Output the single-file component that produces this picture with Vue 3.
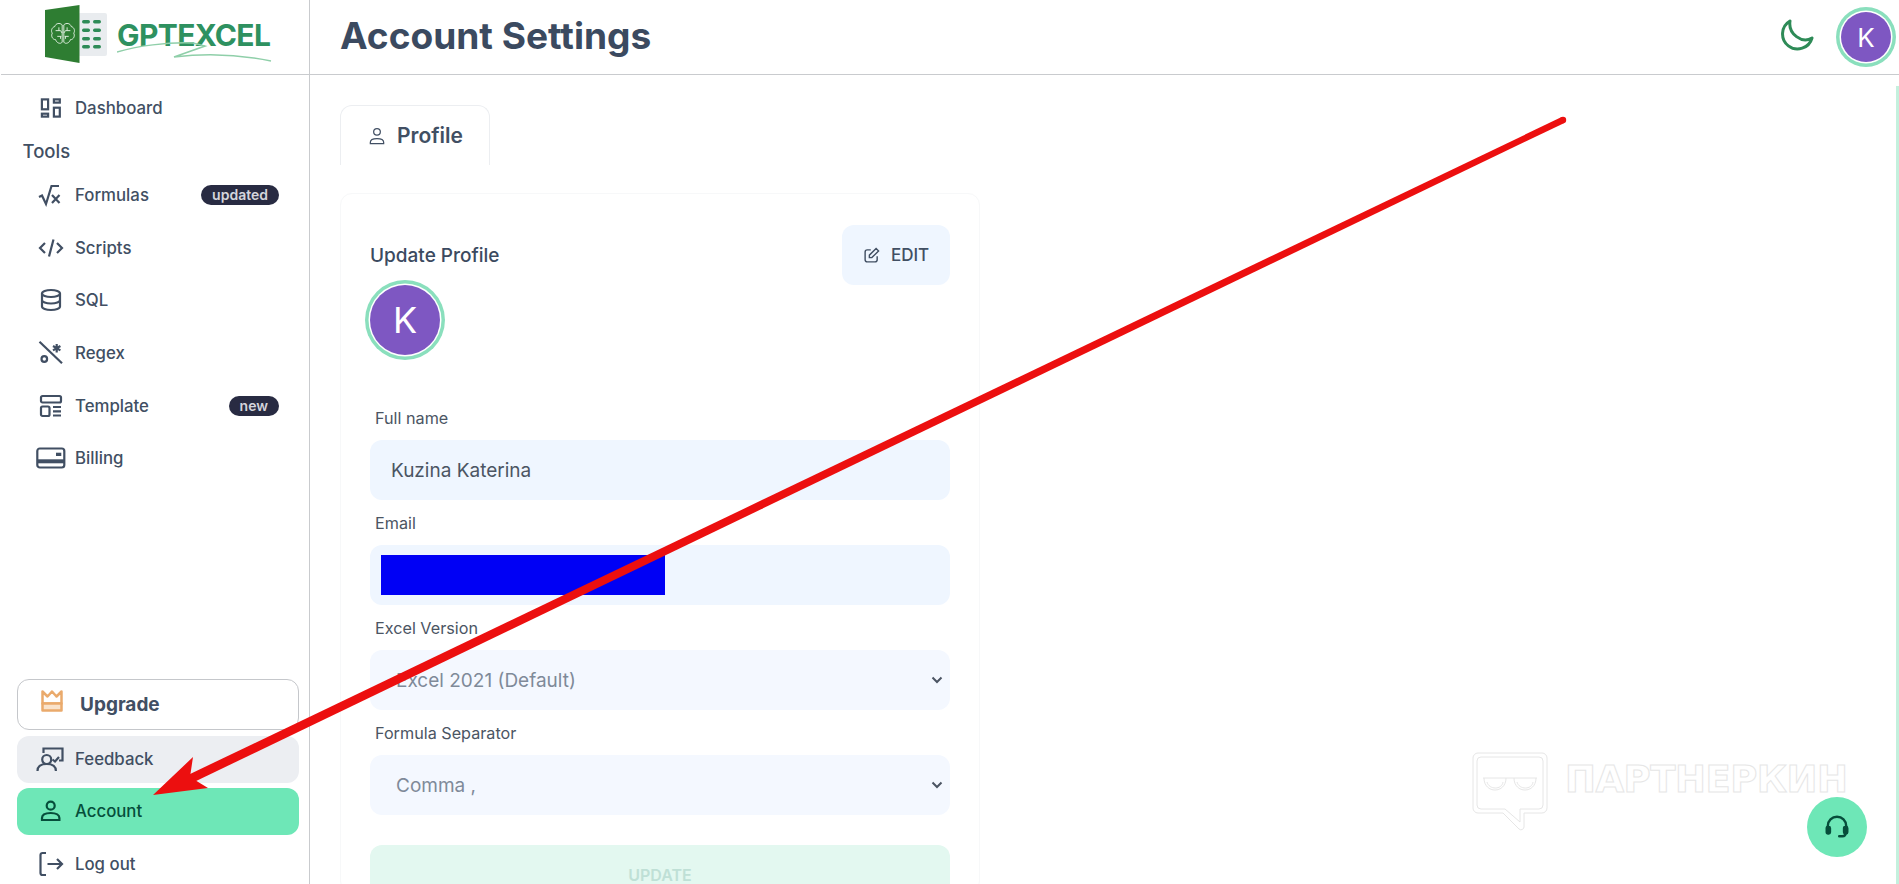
<script setup>
const tools = [
  { label: 'Formulas', badge: 'updated', icon: '<path d="M0 14l3-1.500 4 8.500L12.500 3H20"/><path d="M13 12l7.500 8M20.500 12L13 20"/>' },
  { label: 'Scripts', icon: '<path d="M6 7l-5 5 5 5M18 7l5 5-5 5M14.500 3.500L10 20.500"/>' },
  { label: 'SQL', icon: '<ellipse cx="12" cy="5.500" rx="9" ry="3.500"/><path d="M3 5.500v13c0 2 4 3.500 9 3.500s9-1.500 9-3.500v-13M3 12c0 2 4 3.500 9 3.500s9-1.500 9-3.500"/>' },
  { label: 'Regex', icon: '<path d="M.5.7L23 22.300"/><circle cx="5.300" cy="18" r="2.800"/><path d="M17.700 3v8.500M14 5l7.400 4.400M21.400 5L14 9.400"/>' },
  { label: 'Template', badge: 'new', icon: '<rect x="2" y="2" width="20" height="6.500" rx="1.500"/><rect x="2" y="12.500" width="8.500" height="9.500" rx="1.500"/><path d="M14 13h8M14 17.300h8M14 21.500h8"/>' },
  { label: 'Billing', icon: '<rect x="-1.700" y="2.500" width="27" height="19" rx="2.500"/><path d="M-1.700 15.300h27" stroke-width="4"/><rect x="17" y="6.700" width="5.300" height="3.300" fill="currentColor" stroke="none"/>' }
]

const fields = [
  { label: 'Full name', value: 'Kuzina Katerina' },
  { label: 'Email', value: '', hidden: true }
]

const selects = [
  { label: 'Excel Version', value: 'Excel 2021 (Default)' },
  { label: 'Formula Separator', value: 'Comma ,' }
]
</script>

<template>
  <div class="page">
    <aside class="sidebar">
      <div class="logo">
        <svg class="logo-mark" width="64" height="60" viewBox="0 0 64 60">
          <rect x="33" y="9" width="29" height="43" rx="2" fill="#e9ecef" />
          <path d="M0 6L34.500 1v58L0 53z" fill="#2e7d32" />
          <g fill="#2e8b57">
            <rect x="37" y="16" width="8" height="3.500" rx="1.700" />
            <rect x="48" y="16" width="8" height="3.500" rx="1.700" />
            <rect x="37" y="24.500" width="8" height="3.500" rx="1.700" />
            <rect x="48" y="24.500" width="8" height="3.500" rx="1.700" />
            <rect x="37" y="33" width="8" height="3.500" rx="1.700" />
            <rect x="48" y="33" width="8" height="3.500" rx="1.700" />
            <rect x="37" y="41" width="8" height="3.500" rx="1.700" />
            <rect x="48" y="41" width="8" height="3.500" rx="1.700" />
          </g>
          <g fill="none" stroke="#eaf5ea" stroke-width="1.100" transform="translate(18 29.500) scale(.82) translate(-18 -28.500)">
            <path d="M17 18c-3-3-8-2-9 2-4 1-5 6-3 8-2 3 0 8 4 8 1 4 6 6 8 3zM19 18c3-3 8-2 9 2 4 1 5 6 3 8 2 3 0 8-4 8-1 4-6 6-8 3z" />
            <path d="M9 25h6l2 3M27 25h-6l-2 3M11 32h5M25 32h-5M13 21v4M23 21v4M15 35v-3M21 35v-3" />
          </g>
        </svg>
        <span class="logo-text">GPTEXCEL</span>
        <svg class="logo-swoosh" width="160" height="24" viewBox="0 0 160 24">
          <path d="M0 11C20 5 50 1 76 2 L 88 5 L 57 16 C 90 12 125 14 154 20" fill="none" stroke="#8fcfa9" stroke-width="1.500" />
        </svg>
      </div>

      <a class="nav-row">
        <svg class="icon" viewBox="0 0 24 24"><rect x="2.900" y="3.400" width="6.200" height="9.900" /><rect x="2.900" y="17.700" width="6.200" height="2.900" /><rect x="14.900" y="3.400" width="5.900" height="3.200" /><rect x="14.900" y="11.700" width="5.900" height="8.900" /></svg>
        <span>Dashboard</span>
      </a>
      <div class="section-title">Tools</div>
      <a v-for="item in tools" :key="item.label" class="nav-row">
        <svg class="icon" viewBox="0 0 24 24" v-html="item.icon"></svg>
        <span>{{ item.label }}</span>
        <span v-if="item.badge" class="badge">{{ item.badge }}</span>
      </a>

      <div class="sidebar-bottom">
        <a class="upgrade">
          <svg class="crown" width="24" height="24" viewBox="0 0 24 24" fill="none" stroke="#eaaa6c" stroke-width="2.500" stroke-linejoin="round">
            <path d="M2.500 2.500v12h19v-12l-5 5L12 2.500 7.500 7.500z" />
            <rect x="2.500" y="14.500" width="19" height="7" fill="#f9e3cc" />
          </svg>
          <span>Upgrade</span>
        </a>
        <a class="nav-row feedback">
          <svg class="icon" viewBox="0 0 24 24"><circle cx="7.700" cy="12.500" r="4.500" /><path d="M-1.500 24c0-5 4-7 9.200-7s9.200 2 9.200 7M4.500 6V1.500H23.500V13.500H20M13.500 12.500l2.500 2 4-4.500" /></svg>
          <span>Feedback</span>
        </a>
        <a class="nav-row active">
          <svg class="icon" viewBox="0 0 24 24"><circle cx="11.700" cy="6.700" r="4" /><path d="M3 21v-2c0-3 3-5 8.700-5s8.700 2 8.700 5v2z" /></svg>
          <span>Account</span>
        </a>
        <a class="nav-row">
          <svg class="icon" viewBox="0 0 24 24"><path d="M7 1H3.500a2 2 0 0 0-2 2v18a2 2 0 0 0 2 2H7M8.500 12H23M18 7l5 5-5 5" /></svg>
          <span>Log out</span>
        </a>
      </div>
    </aside>

    <main class="main">
      <header class="topbar">
        <h1>Account Settings</h1>
        <div class="topbar-right">
          <svg class="moon" width="34" height="34" viewBox="0 0 34 34" fill="none" stroke="#2e8b57" stroke-width="3" stroke-linejoin="round"><path d="M10 3A15 15 0 1 0 32 20C22 26 8 16 10 3z" /></svg>
          <div class="avatar small">K</div>
        </div>
      </header>

      <div class="body">
        <div class="content">
          <div class="tab">
            <svg width="20" height="20" viewBox="0 0 24 24" fill="none" stroke="#414f63" stroke-width="1.500"><circle cx="12" cy="7" r="4" /><path d="M4 21v-1.500C4 16.500 7 15 12 15s8 1.500 8 4.500V21z" /></svg>
            <span>Profile</span>
          </div>

          <section class="card">
            <div class="card-head">
              <h2>Update Profile</h2>
              <button class="edit">
                <svg width="17" height="17" viewBox="0 0 24 24" fill="none" stroke="#414f63" stroke-width="2"><path d="M11 4H6a3 3 0 0 0-3 3v11a3 3 0 0 0 3 3h11a3 3 0 0 0 3-3v-5" /><path d="M9 15v-3.500L18.500 2 22 5.500 12.500 15z" /></svg>
                <span>EDIT</span>
              </button>
            </div>
            <div class="avatar large">K</div>

            <div class="fields">
              <div v-for="f in fields" :key="f.label" class="field">
                <label>{{ f.label }}</label>
                <div class="input">
                  <span v-if="!f.hidden">{{ f.value }}</span>
                  <span v-else class="redacted"></span>
                </div>
              </div>
              <div v-for="s in selects" :key="s.label" class="field">
                <label>{{ s.label }}</label>
                <div class="select-wrap">
                  <select class="select" disabled>
                    <option>{{ s.value }}</option>
                  </select>
                  <svg class="chevron" width="12" height="8" viewBox="0 0 12 8" fill="none" stroke="#4b5563" stroke-width="2"><path d="M1.500 1.500L6 6l4.500-4.500" /></svg>
                </div>
              </div>
            </div>

            <button class="update">UPDATE</button>
          </section>
        </div>
        <div class="scroll-line"></div>
      </div>
    </main>

    <div class="watermark">
      <svg width="76" height="80" viewBox="0 0 76 80" fill="none" stroke="#e6e6e6" stroke-width="1">
        <path d="M6 1h64a5 5 0 0 1 5 5v50a5 5 0 0 1-5 5H52v14a3 3 0 0 1-5 2L31 61H6a5 5 0 0 1-5-5V6a5 5 0 0 1 5-5z" />
        <path d="M9 5h58a4 4 0 0 1 4 4v44a4 4 0 0 1-4 4H48v13L33 57H9a4 4 0 0 1-4-4V9a4 4 0 0 1 4-4z" />
        <path d="M11 26h54M12 26c0 16 22 16 22 0M42 26c0 16 22 16 22 0M15 30c2 8 15 8 16 0M45 30c2 8 15 8 16 0" />
      </svg>
      <span>ПАРТНЕРКИН</span>
    </div>

    <button class="support">
      <svg width="26" height="26" viewBox="0 0 24 24" fill="none" stroke="#064e3b" stroke-width="2.200" stroke-linecap="round"><path d="M3.500 14v-3a8.500 8.500 0 0 1 17 0v3M20 17c0 2-1 3.500-3 3.500h-3" /><rect x="2.500" y="12" width="3" height="6" rx="1.200" fill="#064e3b" /><rect x="18.500" y="12" width="3" height="6" rx="1.200" fill="#064e3b" /></svg>
    </button>

    <svg class="arrow" width="1899" height="884" viewBox="0 0 1899 884">
      <circle cx="1563" cy="120" r="3.200" fill="#ec0f0f" />
      <path d="M1564.400 122.900L1561.600 117.100 188 775 192 783z" fill="#ec0f0f" />
      <path d="M153 795L193 757 190 777 208 788z" fill="#ec0f0f" />
    </svg>
  </div>
</template>

<style scoped>
.page {
  position: relative;
  display: flex;
  width: 1899px;
  height: 884px;
  overflow: hidden;
  background: #fff;
  font-family: Inter, "Noto Sans", sans-serif;
  color: #414f63;
}

.sidebar {
  flex: 0 0 309px;
  height: 884px;
  border-right: 1px solid #c9cbce;
  overflow: hidden;
}

.logo {
  position: relative;
  display: flex;
  align-items: flex-start;
  height: 82px;
  padding: 4px 0 0 45px;
  box-sizing: border-box;
}

.logo-mark {
  flex: none;
}

.logo-text {
  margin: 13px 0 0 8px;
  font-size: 30px;
  line-height: 36px;
  font-weight: 700;
  letter-spacing: -0.600px;
  color: #2e9160;
}

.logo-swoosh {
  position: absolute;
  left: 117px;
  top: 41px;
}

.nav-row {
  display: flex;
  align-items: center;
  height: 52.700px;
  padding: 0 30px 0 39px;
  font-size: 16.800px;
  font-weight: 500;
}

.icon {
  flex: none;
  width: 24px;
  height: 24px;
  margin-right: 12px;
  overflow: visible;
  fill: none;
  stroke: currentColor;
  stroke-width: 2.200;
}

.section-title {
  height: 34px;
  padding-left: 22.500px;
  font-size: 18.500px;
  line-height: 33px;
  font-weight: 500;
}

.badge {
  margin-left: auto;
  height: 20px;
  padding: 0 11px;
  border-radius: 10px;
  background: #282b42;
  color: #d4d5dc;
  font-size: 14px;
  line-height: 20px;
  font-weight: 600;
}

.sidebar-bottom {
  margin-top: 193.900px;
}

.upgrade {
  display: flex;
  align-items: center;
  height: 51px;
  margin: 0 10px 6px 17px;
  padding-left: 22px;
  border: 1px solid #c5c7cb;
  border-radius: 12px;
  box-sizing: border-box;
  font-size: 19px;
  font-weight: 700;
}

.crown {
  margin: -7px 16px 0 0;
}

.sidebar-bottom .nav-row {
  height: 47px;
  padding-left: 22px;
  margin: 0 10px 5px 17px;
  border-radius: 12px;
}

.feedback {
  background: #eceef2;
}

.sidebar-bottom .active {
  margin-bottom: 6px;
  background: #6ee7b7;
  color: #064e3b;
}

.main {
  flex: 1;
  min-width: 0;
}

.topbar {
  display: flex;
  align-items: center;
  justify-content: space-between;
  height: 74px;
  padding: 0 2px 0 340px;
  margin-left: -309px;
  border-bottom: 1px solid #c9cbce;
}

h1 {
  margin: -3px 0 0 -1px;
  font-size: 37.100px;
  font-weight: 700;
  color: #3b4a60;
}

.topbar-right {
  display: flex;
  align-items: center;
  gap: 27px;
}

.moon {
  margin-top: -4px;
}

.avatar {
  display: flex;
  align-items: center;
  justify-content: center;
  border-radius: 50%;
  background: #7e57c2;
  color: #fff;
  box-shadow: 0 0 0 1.500px #fff, 0 0 0 5px #8adfbd;
}

.avatar.small {
  width: 50px;
  height: 50px;
  margin-right: 6px;
  font-size: 26px;
}

.avatar.large {
  width: 70px;
  height: 70px;
  font-size: 36px;
}

.body {
  display: flex;
  height: 809px;
}

.content {
  flex: 1;
  padding: 30px 0 0 30px;
}

.scroll-line {
  flex: none;
  width: 3px;
  margin-top: 11px;
  background: #c4f0dd;
}

.tab {
  display: flex;
  align-items: center;
  gap: 10px;
  width: 150px;
  height: 60px;
  padding-left: 26px;
  box-sizing: border-box;
  border: 1px solid #eceef1;
  border-bottom: 0;
  border-radius: 12px 12px 0 0;
  font-size: 21px;
  font-weight: 600;
}

.card {
  width: 640px;
  height: 700px;
  margin-top: 28px;
  padding: 31px 29px 0;
  box-sizing: border-box;
  border: 1px solid #f7f8f9;
  border-radius: 12px;
}

.card-head {
  display: flex;
  align-items: center;
  justify-content: space-between;
}

h2 {
  margin: 0;
  font-size: 19px;
  font-weight: 500;
  color: #3b4a60;
}

.edit {
  display: flex;
  align-items: center;
  justify-content: center;
  gap: 11px;
  width: 108px;
  height: 60px;
  border: 0;
  border-radius: 12px;
  background: #eff6ff;
  color: #414f63;
  font: 500 17px Inter, sans-serif;
}

.fields {
  margin-top: 40px;
}

.field {
  display: flex;
  flex-direction: column;
}

label {
  height: 45px;
  padding-left: 5px;
  font-size: 16.200px;
  line-height: 47px;
  color: #4b5563;
}

.input {
  display: flex;
  align-items: center;
  height: 60px;
  padding-left: 21px;
  border-radius: 12px;
  background: #eff6ff;
  font-size: 19px;
  color: #4b5563;
}

.redacted {
  display: block;
  width: 284px;
  height: 40px;
  margin-left: -10px;
  background: #0000f5;
}

.select-wrap {
  position: relative;
}

.select {
  display: block;
  width: 100%;
  height: 60px;
  padding-left: 26px;
  border: 0;
  border-radius: 12px;
  background-color: #f4f8ff;
  font: 400 19px Inter, sans-serif;
  color: #7f8a99;
  opacity: 1;
  appearance: none;
}

.chevron {
  position: absolute;
  right: 7px;
  top: 26px;
}

.update {
  display: block;
  width: 100%;
  height: 60px;
  margin-top: 30px;
  border: 0;
  border-radius: 12px;
  background: #e3f8f0;
  color: #bfe0d6;
  font: 600 16px Inter, sans-serif;
}

.watermark {
  position: absolute;
  left: 1472px;
  top: 752px;
  display: flex;
  gap: 17px;
}

.watermark span {
  margin-top: 6px;
  font-family: "DejaVu Sans", sans-serif;
  font-size: 37px;
  line-height: 44px;
  font-weight: 700;
  letter-spacing: -0.500px;
  color: #fff;
  -webkit-text-stroke: 1px #e6e6e6;
}

.support {
  position: absolute;
  left: 1807px;
  top: 797px;
  display: flex;
  align-items: center;
  justify-content: center;
  width: 60px;
  height: 60px;
  padding: 0;
  border: 0;
  border-radius: 50%;
  background: #6ee7b7;
}

.arrow {
  position: absolute;
  left: 0;
  top: 0;
  pointer-events: none;
}
</style>

<style>
html, body {
  margin: 0;
  overflow: hidden;
}
</style>
